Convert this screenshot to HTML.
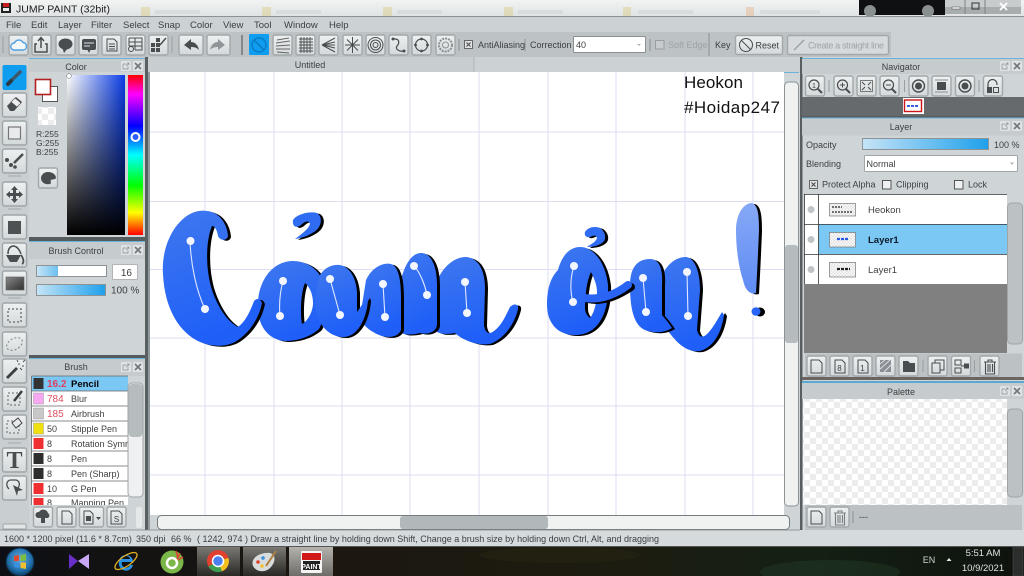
<!DOCTYPE html>
<html><head><meta charset="utf-8"><title>JUMP PAINT</title>
<style>
html,body{margin:0;padding:0;width:1024px;height:576px;overflow:hidden;background:#cfd5d7}
svg.root{display:block;position:absolute;left:0;top:0;filter:blur(.35px)}
text{font-family:"Liberation Sans",sans-serif;font-size:9px;fill:#3c3f41}
.c{text-anchor:middle}
.ic{fill:none;stroke:#4a4d4f;stroke-width:1.2}
.f{fill:#4a4d4f;stroke:none}
.l{stroke:#dddcf2;stroke-width:1}
</style></head><body>
<svg class="root" width="1024" height="576" viewBox="0 0 1024 576" xmlns="http://www.w3.org/2000/svg">
<defs>
<linearGradient id="gb" x1="0" y1="0" x2="0" y2="1"><stop offset="0" stop-color="#eef1f1"/><stop offset="1" stop-color="#d3d8da"/></linearGradient>
<linearGradient id="blue" x1="0" y1="0" x2="0.3" y2="1"><stop offset="0" stop-color="#3f78ee"/><stop offset="1" stop-color="#1f5ff8"/></linearGradient>
<linearGradient id="ex" x1="0" y1="0" x2="0" y2="1"><stop offset="0" stop-color="#86a8f6"/><stop offset="1" stop-color="#5f8cf4"/></linearGradient>
<linearGradient id="sl" x1="0" y1="0" x2="1" y2="0"><stop offset="0" stop-color="#c6e4f6"/><stop offset="1" stop-color="#1ea0ec"/></linearGradient>
<linearGradient id="sl2" x1="0" y1="0" x2="1" y2="0"><stop offset="0" stop-color="#c6e4f6"/><stop offset="1" stop-color="#6cc0f0"/></linearGradient>
<linearGradient id="sv" x1="0" y1="0" x2="1" y2="0"><stop offset="0" stop-color="#fff"/><stop offset="1" stop-color="#0a3ce6"/></linearGradient>
<linearGradient id="sk" x1="0" y1="0" x2="0" y2="1"><stop offset="0" stop-color="#000" stop-opacity="0"/><stop offset="1" stop-color="#000"/></linearGradient>
<linearGradient id="hue" x1="0" y1="0" x2="0" y2="1"><stop offset="0" stop-color="#f00"/><stop offset=".12" stop-color="#f0f"/><stop offset=".32" stop-color="#00f"/><stop offset=".5" stop-color="#0ff"/><stop offset=".69" stop-color="#0f0"/><stop offset=".86" stop-color="#ff0"/><stop offset="1" stop-color="#f00"/></linearGradient>
<linearGradient id="title" x1="0" y1="0" x2="0" y2="1"><stop offset="0" stop-color="#f2f4f4"/><stop offset="1" stop-color="#dfe3e3"/></linearGradient>
<linearGradient id="grad" x1="0" y1="0" x2="1" y2="1"><stop offset="0" stop-color="#888"/><stop offset="1" stop-color="#2e2e2e"/></linearGradient>
<linearGradient id="task" x1="0" y1="0" x2="1" y2="0"><stop offset="0" stop-color="#0d0f14"/><stop offset=".3" stop-color="#1c1710"/><stop offset=".6" stop-color="#1d1c10"/><stop offset=".8" stop-color="#142014"/><stop offset="1" stop-color="#0e120e"/></linearGradient>
<linearGradient id="tb" x1="0" y1="0" x2="0" y2="1"><stop offset="0" stop-color="#7a7873"/><stop offset="1" stop-color="#2a2824"/></linearGradient>
<linearGradient id="tb2" x1="0" y1="0" x2="0" y2="1"><stop offset="0" stop-color="#b4b2ad"/><stop offset="1" stop-color="#6e6c68"/></linearGradient>
<radialGradient id="orb" cx=".5" cy=".4" r=".6"><stop offset="0" stop-color="#6bb0e0"/><stop offset=".7" stop-color="#1f6ea8"/><stop offset="1" stop-color="#0d3a5c"/></radialGradient>
<pattern id="chk" width="12" height="12" patternUnits="userSpaceOnUse"><rect width="12" height="12" fill="#fff"/><rect width="6" height="6" fill="#ececec"/><rect x="6" y="6" width="6" height="6" fill="#ececec"/></pattern>
<pattern id="chk2" width="3" height="3" patternUnits="userSpaceOnUse"><rect width="3" height="3" fill="#fff"/><rect width="1.5" height="1.5" fill="#ddd"/><rect x="1.5" y="1.5" width="1.5" height="1.5" fill="#ddd"/></pattern>
<rect id="B" width="19" height="20" rx="2" fill="url(#gb)" stroke="#a2a8aa" stroke-width="1.4"/>
<rect id="T" width="24" height="24" rx="2" fill="url(#gb)" stroke="#9fa5a7" stroke-width="1.4"/>
<g id="pop"><rect width="10" height="10" rx="1" fill="#dfe3e5"/><path d="M2,3H5M2,3V8H7V5M5,5L8,2M6,2H8V4" fill="none" stroke="#9aa0a2" stroke-width=".9"/><rect x="12" width="10" height="10" rx="1" fill="#dfe3e5"/><path d="M14,2L20,8M20,2L14,8" stroke="#70767a" stroke-width="1.6"/></g>
<path id="p-c" d="M207,211C218,212 227,222 228,236C227,241 220,241 218,236C217,230 215,226 212,226C206,240 205,268 212,290C218,308 228,322 238,327C245,322 250,312 254,301C257,298 260,298 262,303C259,318 250,333 235,342C225,347 212,347 200,342C180,333 165,310 163,275C161,245 175,222 190,214C196,211 201,210 207,211Z"/>
<path id="p-h1" d="M293,220C297,214 310,211 317,213C323,217 322,227 314,232C308,236 302,238 295,239C300,235 308,230 310,224C309,220 305,221 301,225C296,229 292,226 293,220Z"/>
<path id="p-bowl" fill-rule="evenodd" d="M258,305C258,280 273,261 293,261C306,261 316,268 321,277C325,285 325,325 318,330C308,338 296,341 285,341C268,340 257,325 258,305ZM305,283C301,292 300,312 302,324C307,322 313,312 313,303C313,295 310,287 305,283Z"/>
<path id="p-stem" d="M320,275C325,267 333,264 340,265C350,267 356,278 357,292L357,312C360,308 363,303 367,297L368,300C367,315 360,335 345,337C330,338 318,325 316,310C315,298 316,285 320,275Z"/>
<path id="p-m1" d="M366,280C372,267 384,262 391,264C400,267 401,285 401,300L401,330C398,337 390,338 382,336C372,333 362,325 360,318Z"/>
<path id="p-m2" d="M399,288C403,268 410,254 420,253C432,252 437,268 437,285L437,325C436,332 428,335 420,333C412,335 402,336 398,330Z"/>
<path id="p-m3" d="M433,290C441,268 452,258 465,257C478,257 485,270 485,288L484,325C485,333 489,335 494,331C502,325 506,315 510,307C514,303 519,304 518,309C515,322 506,338 490,344C478,346 462,340 455,333C445,335 436,334 433,328Z"/>
<path id="p-o" fill-rule="evenodd" d="M547,305C547,290 550,278 558,270C562,255 570,247 580,247C595,247 606,265 608,285C609,310 600,335 575,335C555,335 547,320 547,305ZM591,272C586,282 585,300 585,308C585,312 587,316 590,318C595,312 597,300 597,292C597,285 594,278 591,272Z"/>
<path id="p-h2" d="M585,232C588,227 595,226 600,228C606,232 607,240 602,243C598,246 592,247 587,247C591,244 596,242 597,238C596,234 592,236 590,237C586,238 584,235 585,232Z"/>
<path id="p-n1" d="M630,285C630,268 637,259 650,259C660,259 663,270 662,285L662,315C668,322 670,325 672,328C664,333 655,333 648,331C635,328 630,312 630,285Z"/>
<path id="p-n2" d="M658,285C664,268 672,258 685,257C695,257 700,272 700,290L697,330C699,337 702,338 706,335C712,330 717,320 722,312L724,315C722,330 715,347 700,351C685,353 675,340 668,331C660,320 658,300 658,285Z"/>
<path id="p-ex" d="M752,203C758,205 759,215 759,230C758,255 757,275 756,293C750,295 745,290 743,280C738,265 736,245 736,230C736,215 743,203 752,203Z"/>
</defs>

<!-- title bar -->
<rect width="1024" height="17" fill="url(#title)"/>
<g opacity=".4"><rect x="141" y="7" width="9" height="9" fill="#d8c878"/><rect x="262" y="7" width="9" height="9" fill="#d8c878"/><rect x="383" y="7" width="9" height="9" fill="#d8c878"/><rect x="504" y="7" width="9" height="9" fill="#d8c878"/><rect x="623" y="7" width="8" height="9" fill="#d8c878"/><rect x="746" y="7" width="8" height="9" fill="#e8b080"/>
<rect x="155" y="10" width="45" height="4" fill="#c8cccc"/><rect x="276" y="10" width="45" height="4" fill="#c8cccc"/><rect x="397" y="10" width="45" height="4" fill="#c8cccc"/><rect x="518" y="10" width="45" height="4" fill="#c8cccc"/><rect x="638" y="10" width="55" height="4" fill="#c8cccc"/><rect x="760" y="10" width="60" height="4" fill="#c8cccc"/></g>
<rect x="859" y="0" width="86" height="15" fill="#0e1012"/>
<circle cx="870" cy="11" r="6" fill="#8a8f90"/><circle cx="928" cy="11" r="6" fill="#8a8f90"/>
<rect x="945" y="0" width="76" height="14" fill="#a8adae"/>
<rect x="945" y="0" width="76" height="7" fill="#c8cccc"/>
<path d="M965,0V14M985,0V14" stroke="#7a7f80"/>
<rect x="952" y="7" width="8" height="2" fill="#fff" stroke="#444" stroke-width=".5"/>
<rect x="972" y="3" width="7" height="6" fill="none" stroke="#333"/>
<path d="M1000,3L1007,10M1007,3L1000,10" stroke="#fff" stroke-width="1.800"/>
<rect x="1" y="3" width="10" height="10" fill="#222"/><rect x="3" y="3" width="6" height="4" fill="#c82020"/><rect x="3" y="8" width="6" height="3" fill="#eee"/>
<text x="16" y="12.5" style="font-size:10.5px;fill:#1c1c1c">JUMP PAINT (32bit)</text>

<!-- menu -->
<rect y="16" width="1024" height="1" fill="#8e9294"/>
<rect y="17" width="1024" height="15" fill="#ccd2d4"/>
<g>
<text x="6" y="28" style="font-size:9.5px">File</text><text x="31" y="28" style="font-size:9.5px">Edit</text><text x="58" y="28" style="font-size:9.5px">Layer</text><text x="91" y="28" style="font-size:9.5px">Filter</text><text x="123" y="28" style="font-size:9.5px">Select</text><text x="158" y="28" style="font-size:9.5px">Snap</text><text x="190" y="28" style="font-size:9.5px">Color</text><text x="223" y="28" style="font-size:9.5px">View</text><text x="254" y="28" style="font-size:9.5px">Tool</text><text x="284" y="28" style="font-size:9.5px">Window</text><text x="329" y="28" style="font-size:9.5px">Help</text>
</g>

<!-- toolbar -->
<rect y="32" width="891" height="25" fill="#bdc3c5"/>
<rect x="891" y="32" width="133" height="25" fill="#ccd2d4"/>
<path d="M3,36V53M172,36V53" stroke="#9a9ea0"/><path d="M242,35V55" stroke="#5e6264" stroke-width="1.2"/>
<use href="#B" x="9" y="35"/><use href="#B" x="32" y="35"/><use href="#B" x="56" y="35"/><use href="#B" x="79" y="35"/><use href="#B" x="102" y="35"/><use href="#B" x="126" y="35"/><use href="#B" x="149" y="35"/>
<rect x="179" y="35" width="24" height="20" rx="2" fill="url(#gb)" stroke="#a2a8aa" stroke-width="1.4"/><rect x="207" y="35" width="23" height="20" rx="2" fill="url(#gb)" stroke="#a2a8aa" stroke-width="1.4"/>
<rect x="249" y="34" width="20" height="21" rx="1" fill="#0f9df0"/>
<use href="#B" x="273" y="35"/><use href="#B" x="296" y="35"/><use href="#B" x="319" y="35"/><use href="#B" x="343" y="35"/><use href="#B" x="366" y="35"/><use href="#B" x="389" y="35"/><use href="#B" x="412" y="35"/><use href="#B" x="436" y="35"/>
<!-- toolbar icons -->
<path d="M14,50a3.5,3.5 0 0 1 .5,-7a4.7,4.7 0 0 1 8.5,-.5a3.8,3.8 0 0 1 .5,7.5z" fill="#f4f8fb" stroke="#4f9fe0" stroke-width="1.4"/>
<path class="ic" d="M37,44H35V52H47V44H45M41,48V38M38,41L41,37.500L44,41" style="stroke-width:1.5"/>
<ellipse class="f" cx="65.500" cy="44" rx="7" ry="5.500"/><path class="f" d="M62,47L64,53L68,48Z"/>
<rect class="f" x="82" y="39" width="14" height="11" rx="2"/><path class="f" d="M87,49L89,53L91,49Z"/><path d="M84,43H94M84,46H90" stroke="#dde" stroke-width="1"/>
<path class="ic" d="M107,39H114L117,42V51H107ZM109,44H115M109,46.500H115M109,49H115" style="stroke-width:1"/>
<path class="ic" d="M129,38H142V50H135M129,38V46M129,42H142M129,46H142M135,38V50" style="stroke-width:1"/><circle class="ic" cx="131" cy="49" r="2.500" style="stroke-width:1"/>
<path class="f" d="M151,43H155V47H151ZM156,43H160V47H156ZM151,48H155V52H151ZM156,48H160V52H156ZM156,38H160V42H156Z"/><path d="M160,45L166,38" stroke="#4a4d4f" stroke-width="1.500"/>
<path d="M191,39L184,45L191,50V47C195,47 197,48 199,50C198,45 195,42 191,42Z" fill="#4a4d4f"/>
<path d="M218,39L225,45L218,50V47C214,47 212,48 210,50C211,45 214,42 218,42Z" fill="#8f9597"/>
<g><circle cx="259" cy="45" r="7" fill="none" stroke="#0a78c0" stroke-width="1.300"/><path d="M254,40L264,50" stroke="#0a78c0" stroke-width="1.300"/></g>
<path class="ic" d="M277,40L289,38M276,43L290,41M276,46L290,45M276,49L290,49M277,52L289,53" style="stroke-width:.9;stroke:#666"/>
<path class="ic" d="M299,39H313M299,42H313M299,45H313M299,48H313M299,51H313M301,37V53M304,37V53M307,37V53M310,37V53" style="stroke-width:.9"/>
<path class="ic" d="M322,45L335,38M322,45L335,42M322,45L335,45M322,45L335,48M322,45L335,52" style="stroke-width:1"/>
<path class="ic" d="M352.500,37V53M345,45H360M347,39.500L358,50.500M358,39.500L347,50.500" style="stroke-width:1"/>
<circle class="ic" cx="375.500" cy="45" r="7.500" style="stroke-width:1"/><circle class="ic" cx="375.500" cy="45" r="5" style="stroke-width:1"/><circle class="ic" cx="375.500" cy="45" r="2.500" style="stroke-width:1"/>
<path class="ic" d="M393,39H396C400,40 399,44 397,46C395,49 399,52 404,51"/><circle class="f" cx="393" cy="39" r="1.500"/><circle class="f" cx="404" cy="51" r="1.500"/>
<circle class="ic" cx="421.500" cy="45" r="6"/><circle class="f" cx="421.500" cy="39" r="1.400"/><circle class="f" cx="427.500" cy="45" r="1.400"/><circle class="f" cx="421.500" cy="51" r="1.400"/><circle class="f" cx="415.500" cy="45" r="1.400"/>
<circle cx="445.500" cy="45" r="6.500" fill="none" stroke="#8a8f91" stroke-dasharray="2 1" stroke-width="2"/><circle cx="445.500" cy="45" r="3" fill="none" stroke="#8a8f91"/>
<path d="M459,39V51M525,39V51M650,39V51" stroke="#8a8f91"/>
<rect x="464.500" y="40.500" width="8" height="8" fill="#dfe3e4" stroke="#666"/><path d="M466.500,42.500L470.500,46.500M470.500,42.500L466.500,46.500" stroke="#444"/>
<text x="478" y="48">AntiAliasing</text>
<text x="530" y="48">Correction</text>
<rect x="573.500" y="36.500" width="72" height="16" rx="1" fill="#fff" stroke="#8a8f91"/>
<text x="576" y="48">40</text>
<path d="M637,44H641L639,46Z" fill="#b0b4b6"/>
<rect x="655.500" y="40.500" width="8.500" height="8.500" fill="#c6cbcd" stroke="#9a9ea0"/>
<text x="668" y="48" style="fill:#9ea3a5">Soft Edge</text>
<path d="M709,33V56" stroke="#8a8f91"/>
<text x="715" y="48">Key</text>
<rect x="735.500" y="35.500" width="47" height="19" rx="2" fill="url(#gb)" stroke="#a2a8aa" stroke-width="1.4"/>
<circle cx="746" cy="45" r="6.500" fill="none" stroke="#4a4d4f"/><path d="M741.500,40.500L750.500,49.500" stroke="#4a4d4f"/>
<text x="755.500" y="48.500">Reset</text>
<rect x="787.500" y="35.500" width="101" height="19" rx="2" fill="#d6dadc" stroke="#a2a8aa" stroke-width="1.4"/>
<path d="M794,50L804,40" stroke="#9a9ea0" stroke-width="1.300"/>
<text x="808" y="48.500" style="fill:#9ea3a5" textLength="76">Create a straight line</text>

<!-- left tools column -->
<rect y="57" width="29" height="473" fill="#c9cfd1"/>
<rect x="2.500" y="65" width="24" height="25" rx="2" fill="#0f9df0"/>
<path d="M8,84L20,72" stroke="#3c5a6c" stroke-width="3.500" stroke-linecap="round"/><path d="M8,84L11,81" stroke="#2a3a44" stroke-width="4" stroke-linecap="round"/>
<use href="#T" x="2.500" y="93"/><use href="#T" x="2.500" y="121"/><use href="#T" x="2.500" y="149"/><use href="#T" x="2.500" y="182"/><use href="#T" x="2.500" y="215"/><use href="#T" x="2.500" y="243"/><use href="#T" x="2.500" y="271"/><use href="#T" x="2.500" y="303"/><use href="#T" x="2.500" y="332"/><use href="#T" x="2.500" y="359"/><use href="#T" x="2.500" y="387"/><use href="#T" x="2.500" y="415"/><use href="#T" x="2.500" y="448"/><use href="#T" x="2.500" y="476"/>
<path d="M8,176H21M8,209H21M8,298H21M8,443H21" stroke="#a4a9ab"/>
<rect x="3" y="524" width="23" height="5" rx="1" fill="#e2e6e7" stroke="#9fa5a7"/>
<!-- eraser -->
<path class="f" d="M7,106L16,97L22,102L14,111H10Z"/><path d="M15,98L21,103L17,107L11,102Z" fill="#eee" stroke="#4a4d4f" stroke-width=".6"/>
<rect x="8.500" y="127" width="12" height="12" fill="#e8eaeb" stroke="#777" stroke-width="1.200"/>
<circle class="f" cx="7" cy="160" r="2"/><circle class="f" cx="11" cy="165" r="2"/><circle class="f" cx="15" cy="167" r="1.800"/><path d="M14,163L23,154" stroke="#4a4d4f" stroke-width="2.500"/>
<path class="f" d="M14.500,186L18,190H16V193H19V191L23,194.500L19,198V196H16V199H18L14.500,203L11,199H13V196H10V198L6,194.500L10,191V193H13V190H11Z"/>
<rect x="8" y="221" width="13" height="13" fill="#4e5153"/>
<path class="f" d="M6,255H21L17,262H10Z"/><path class="ic" d="M8,254C8,249 10,246 14,246C18,247 20,251 21,254" style="stroke-width:1.500"/><path d="M21,255C24,259 24,263 22,264" fill="none" stroke="#4a4d4f" stroke-width="1.800"/>
<rect x="6" y="277" width="18" height="13" fill="url(#grad)" stroke="#666" stroke-width=".7"/>
<rect x="8" y="309" width="13" height="13" fill="none" stroke="#666" stroke-width="1.300" stroke-dasharray="2 2"/>
<ellipse cx="14.500" cy="344" rx="8.500" ry="5.500" transform="rotate(-30 14.500 344)" fill="none" stroke="#8a8f91" stroke-width="1.200" stroke-dasharray="2 2"/>
<path d="M7,378L17,368" stroke="#3c3f41" stroke-width="2.800"/><path d="M19,363V365M22,366H24M20,368L22,370M18,362L17,360M23,362L25,360" stroke="#555" stroke-width="1"/>
<rect x="8" y="393" width="12" height="12" fill="none" stroke="#666" stroke-dasharray="2 2"/><path d="M14,401L22,391" stroke="#3c3f41" stroke-width="2.500"/>
<rect x="7" y="421" width="12" height="12" fill="none" stroke="#666" stroke-dasharray="2 2"/><path d="M12,423L18,418L22,423L16,428Z" fill="#e8eaeb" stroke="#444"/>
<text x="14.500" y="468" class="c" style="font-family:'Liberation Serif',serif;font-size:24px;font-weight:bold;fill:#4a4d4f">T</text>
<path class="ic" d="M9,489C5,485 7,480 11,480H16C20,481 20,485 18,488" style="stroke-width:1.300"/><path class="f" d="M13,485L23,490L18,491L17,496Z"/>

<!-- color panel -->
<rect x="29" y="57" width="116" height="181" fill="#cfd5d7"/>
<rect x="29" y="57" width="116" height="15" fill="#c6ccce"/>
<rect x="29" y="58" width="116" height="1" fill="#6cb2d8"/>
<text x="76" y="70" class="c">Color</text>
<use href="#pop" x="121" y="61"/>
<rect x="42.500" y="86.500" width="15" height="15" fill="#fff" stroke="#555"/>
<rect x="35.500" y="79.500" width="15" height="15" fill="#fff" stroke="#b42020" stroke-width="1.600"/>
<rect x="38" y="107" width="18" height="18" fill="url(#chk)"/>
<text x="36" y="137" style="font-size:8.500px">R:255</text><text x="36" y="146" style="font-size:8.500px">G:255</text><text x="36" y="155" style="font-size:8.500px">B:255</text>
<use href="#B" x="38.500" y="168"/>
<path class="f" d="M48,172C43,172 41,176 41,178C41,183 46,185 50,184C52,183 50,181 51,180C52,179 55,180 56,178C56,175 53,172 48,172Z"/>
<rect x="67" y="75" width="58" height="160" fill="url(#sv)"/><rect x="67" y="75" width="58" height="160" fill="url(#sk)"/>
<circle cx="69" cy="76" r="2.300" fill="#fff" stroke="#666" stroke-width=".5"/>
<rect x="128" y="75" width="15" height="160" fill="url(#hue)"/>
<circle cx="135.500" cy="137" r="4" fill="#2a5cff" stroke="#fff" stroke-width="2"/>
<rect x="29" y="237" width="116" height="4" fill="#565b5e"/>
<!-- brush control -->
<rect x="29" y="241" width="116" height="114" fill="#cfd5d7"/>
<rect x="29" y="242" width="116" height="17" fill="#c6ccce"/>
<rect x="29" y="241" width="116" height="1" fill="#6cb2d8"/>
<text x="76" y="254" class="c">Brush Control</text>
<use href="#pop" x="121" y="245"/>
<rect x="36.500" y="265.500" width="70" height="11" fill="#fff" stroke="#8d9294"/><rect x="37" y="266" width="21" height="10" fill="url(#sl2)"/>
<rect x="112.500" y="264.500" width="25" height="15" rx="1" fill="#fff" stroke="#b0b4b6"/><text x="132" y="276" style="font-size:10px;text-anchor:end">16</text>
<rect x="36.500" y="284.500" width="69" height="11" fill="url(#sl)" stroke="#8d9294"/>
<text x="111" y="293.500" style="font-size:10px">100 %</text>
<rect x="29" y="355" width="116" height="3" fill="#565b5e"/>
<!-- brush list -->
<rect x="29" y="358" width="116" height="172" fill="#cfd5d7"/>
<rect x="29" y="358" width="116" height="18" fill="#c6ccce"/>
<rect x="29" y="358" width="116" height="1" fill="#6cb2d8"/>
<text x="76" y="370" class="c">Brush</text>
<use href="#pop" x="121" y="362"/>
<rect x="31.500" y="376" width="96.500" height="129" fill="#fff"/>
<rect x="31.500" y="376" width="96.500" height="15" fill="#7cc8f4"/>
<path d="M31.500,376H128M31.500,391H128M31.500,406H128M31.500,421H128M31.500,436H128M31.500,451H128M31.500,466H128M31.500,481H128M31.500,496H128M31.500,376V505" stroke="#666" fill="none" stroke-width=".8"/>
<rect x="33.500" y="378" width="10" height="11" fill="#333"/><rect x="33.500" y="393" width="10" height="11" fill="#f8a8f0" stroke="#888" stroke-width=".4"/><rect x="33.500" y="408" width="10" height="11" fill="#c8c8c8" stroke="#888" stroke-width=".4"/><rect x="33.500" y="423" width="10" height="11" fill="#f0e010" stroke="#888" stroke-width=".4"/><rect x="33.500" y="438" width="10" height="11" fill="#f03030"/><rect x="33.500" y="453" width="10" height="11" fill="#2e2e2e"/><rect x="33.500" y="468" width="10" height="11" fill="#2e2e2e"/><rect x="33.500" y="483" width="10" height="11" fill="#f03030"/><rect x="33.500" y="498" width="10" height="7" fill="#f03030"/>
<g>
<text x="47" y="387" style="font-size:10px;font-weight:bold;fill:#e04060">16.2</text><text x="71" y="387" style="font-size:9.500px;font-weight:bold;fill:#000">Pencil</text>
<text x="47" y="402" style="font-size:10px;fill:#e05060">784</text><text x="71" y="402">Blur</text>
<text x="47" y="417" style="font-size:10px;fill:#e05060">185</text><text x="71" y="417">Airbrush</text>
<text x="47" y="432">50</text><text x="71" y="432">Stipple Pen</text>
<text x="47" y="447">8</text><text x="71" y="447">Rotation Symr</text>
<text x="47" y="462">8</text><text x="71" y="462">Pen</text>
<text x="47" y="477">8</text><text x="71" y="477">Pen (Sharp)</text>
<text x="47" y="492">10</text><text x="71" y="492">G Pen</text>
<svg x="31" y="496" width="97" height="9"><text x="16" y="10">8</text><text x="40" y="10">Mapping Pen</text></svg>
</g>
<rect x="128" y="383" width="15" height="114" rx="4" fill="#eef0f1" stroke="#a0a5a7"/>
<rect x="128.500" y="384" width="14" height="53" rx="4" fill="#b6bcbe"/>
<use href="#B" x="33.500" y="507"/><use href="#B" x="57" y="507"/><rect x="79.500" y="507" width="24" height="20" rx="2" fill="url(#gb)" stroke="#a2a8aa" stroke-width="1.400"/><use href="#B" x="107" y="507"/>
<rect x="136" y="507" width="6" height="21" rx="2" fill="#e4e8e9"/>
<path class="f" d="M38,518a3,3 0 0 1 1,-6a5,5 0 0 1 9,1a3,3 0 0 1 0,5H45V523H41V518Z"/>
<path class="ic" d="M62,511H69L72,514V524H62Z" style="stroke-width:1"/>
<path class="ic" d="M84,511H90L93,514V524H84Z" style="stroke-width:1"/><rect class="f" x="86" y="516" width="5" height="5"/><path class="f" d="M96,517H101L98.500,520Z"/>
<path class="ic" d="M111,511H119L122,514V524H111Z" style="stroke-width:1"/><text x="116.500" y="522" class="c" style="font-size:8px">S</text>

<rect x="145" y="57" width="3.500" height="473" fill="#5a5f62"/>

<!-- canvas -->
<rect x="148" y="57" width="652" height="15" fill="#ccd2d4"/>
<rect x="148" y="57" width="326" height="15" fill="#c8ced0"/>
<path d="M474,57V72" stroke="#b0b6b8"/>
<text x="310" y="68" class="c">Untitled</text>
<rect x="148" y="72" width="636" height="443" fill="#fff"/>
<path class="l" d="M205,72V515M274,72V515M342,72V515M410,72V515M479,72V515M548,72V515M616,72V515M685,72V515M753,72V515M148,132H784M148,201.500H784M148,269.500H784M148,338H784M148,406H784M148,475H784"/>
<text x="684" y="88" style="font-size:17px;fill:#111" textLength="59">Heokon</text>
<text x="684" y="113" style="font-size:17px;fill:#111" textLength="96">#Hoidap247</text>

<!-- lettering -->
<use href="#p-m3" x="3" y="1" fill="#000"/><use href="#p-m3" fill="url(#blue)"/>
<use href="#p-m2" x="3" y="1" fill="#000"/><use href="#p-m2" fill="url(#blue)"/>
<use href="#p-m1" x="3" y="1" fill="#000"/><use href="#p-m1" fill="url(#blue)"/>
<use href="#p-bowl" x="3" y="1" fill="#000"/><use href="#p-bowl" fill="url(#blue)"/>
<use href="#p-stem" x="3" y="1" fill="#000"/><use href="#p-stem" fill="url(#blue)"/>
<use href="#p-c" x="3" y="1" fill="#000"/><use href="#p-c" fill="url(#blue)"/>
<use href="#p-h1" x="3" y="1" fill="#000"/><use href="#p-h1" fill="#2f6cf2"/>
<use href="#p-n2" x="3" y="1" fill="#000"/><use href="#p-n2" fill="url(#blue)"/>
<use href="#p-n1" x="3" y="1" fill="#000"/><use href="#p-n1" fill="url(#blue)"/>
<use href="#p-o" x="3" y="1" fill="#000"/><use href="#p-o" fill="url(#blue)"/>
<path d="M588,299C601,302 615,298 631,287" fill="none" stroke="#000" stroke-width="8" stroke-linecap="round"/>
<path d="M585,298C600,300 615,295 628,285" fill="none" stroke="#2a64f4" stroke-width="8" stroke-linecap="round"/>
<use href="#p-h2" x="3" y="1" fill="#000"/><use href="#p-h2" fill="#2f6cf2"/>
<use href="#p-ex" x="3" y="1" fill="#000"/><use href="#p-ex" fill="url(#ex)"/>
<ellipse cx="760" cy="312" rx="5" ry="4.500" fill="#000"/><ellipse cx="756" cy="311.500" rx="4.500" ry="4.300" fill="#2a64f4"/>
<g fill="none" stroke="#dfe8ff" stroke-width="1.100">
<path d="M190,241C191,265 196,290 205,309M283,281C280,292 279,305 280,316M330,279L340,315M383,284L385,317M414,266C420,272 425,285 427,295M465,282L467,313M574,266C570,278 570,292 573,302M643,278L646,312M687,272L688,316"/></g>
<g fill="#f4f6ff"><circle cx="190.500" cy="241" r="4"/><circle cx="205" cy="309" r="4"/><circle cx="283" cy="281" r="4"/><circle cx="280" cy="316" r="4"/><circle cx="330" cy="279" r="4"/><circle cx="340" cy="315" r="4"/><circle cx="383" cy="284" r="4"/><circle cx="385" cy="317" r="4"/><circle cx="414" cy="266" r="4"/><circle cx="427" cy="295" r="4"/><circle cx="465" cy="282" r="4"/><circle cx="467" cy="313" r="4"/><circle cx="574" cy="266" r="4"/><circle cx="573" cy="302" r="4"/><circle cx="643" cy="278" r="4"/><circle cx="646" cy="312" r="4"/><circle cx="687" cy="272" r="4"/><circle cx="688" cy="316" r="4"/></g>

<!-- scrollbars -->
<rect x="784" y="72" width="16" height="458" fill="#cfd5d7"/>
<rect x="784" y="72" width="15" height="1" fill="#6cb2d8"/>
<rect x="784.500" y="82" width="14" height="424" rx="4" fill="#f0f2f2" stroke="#8d9294"/>
<rect x="785" y="245" width="13" height="98" rx="3" fill="#b6bcbe"/>
<rect x="148" y="515" width="652" height="15" fill="#cfd5d7"/>
<rect x="157.500" y="515.500" width="632" height="14" rx="4" fill="#f0f2f2" stroke="#777c7e"/>
<rect x="400" y="516" width="148" height="13" rx="3" fill="#b2b8ba"/>
<rect x="148" y="72" width="2" height="458" fill="#8f9a9e"/>

<!-- right side -->
<rect x="800" y="57" width="224" height="473" fill="#cfd5d7"/>
<rect x="800" y="57" width="2.500" height="473" fill="#585d60"/>
<rect x="802" y="58" width="222" height="1" fill="#6cb2d8"/>
<rect x="802" y="59" width="222" height="15" fill="#c6ccce"/>
<text x="901" y="70" class="c">Navigator</text>
<use href="#pop" x="1000" y="61"/>
<use href="#B" x="805.500" y="76"/><use href="#B" x="834" y="76"/><use href="#B" x="857" y="76"/><use href="#B" x="880" y="76"/><use href="#B" x="909" y="76"/><use href="#B" x="932" y="76"/><use href="#B" x="955.500" y="76"/><use href="#B" x="983.500" y="76"/>
<path d="M829,80V92M904.500,80V92M979,80V92" stroke="#9a9ea0"/>
<circle class="ic" cx="814" cy="85" r="5"/><path d="M818,89L822,93" stroke="#4a4d4f" stroke-width="2"/><text x="814" y="88" class="c" style="font-size:7px">1</text>
<circle class="ic" cx="842.500" cy="85" r="5"/><path d="M846,89L850,93" stroke="#4a4d4f" stroke-width="2"/><path d="M840,85H845M842.500,82.500V87.500" stroke="#4a4d4f"/>
<rect x="860.500" y="80.500" width="12" height="11" fill="none" stroke="#777"/><path d="M862,82L865,85M871,82L868,85M862,90L865,87M871,90L868,87" stroke="#4a4d4f"/>
<circle class="ic" cx="888.500" cy="85" r="5"/><path d="M892,89L896,93" stroke="#4a4d4f" stroke-width="2"/><path d="M886,85H891" stroke="#4a4d4f"/>
<circle cx="918.500" cy="86" r="6" fill="none" stroke="#4a4d4f" stroke-width="1.400"/><circle class="f" cx="918.500" cy="86" r="3.500"/>
<rect class="f" x="937" y="82" width="9" height="8"/><path d="M935,80H948M935,92H948" stroke="#8a8f91"/>
<circle cx="965" cy="86" r="6" fill="none" stroke="#4a4d4f" stroke-width="1.400"/><circle class="f" cx="965" cy="86" r="3.500"/>
<path class="ic" d="M988,87V84A4.500,4.500 0 0 1 997,84V85"/><rect class="f" x="987" y="87" width="5" height="6"/><rect x="993.500" y="87.500" width="5" height="5" fill="none" stroke="#4a4d4f"/>
<rect x="802" y="97" width="222" height="19" fill="#666a6c"/>
<rect x="903" y="98" width="21" height="16" fill="#fff"/><rect x="904.500" y="100" width="17" height="11.500" fill="#fff" stroke="#cc1414" stroke-width="1.400"/><path d="M907,106H919" stroke="#3a60e0" stroke-width="2" stroke-dasharray="3 1"/>
<rect x="802" y="116" width="222" height="2" fill="#585d60"/>
<rect x="802" y="117.500" width="222" height="1" fill="#6cb2d8"/>
<rect x="802" y="118.500" width="222" height="17" fill="#c6ccce"/>
<text x="901" y="130" class="c">Layer</text>
<use href="#pop" x="1000" y="121"/>
<text x="806" y="148">Opacity</text>
<rect x="862.500" y="138.500" width="126" height="11" fill="url(#sl)" stroke="#8d9294"/>
<text x="994" y="148">100 %</text>
<text x="806" y="167">Blending</text>
<rect x="864.500" y="155.500" width="153" height="16" rx="1" fill="#fff" stroke="#a0a5a7"/>
<text x="866.500" y="167">Normal</text>
<path d="M1010,162.500H1014L1012,165Z" fill="#b0b4b6"/>
<rect x="809.500" y="180.500" width="8" height="8" fill="#dfe3e4" stroke="#666"/><path d="M811.500,182.500L815.500,186.500M815.500,182.500L811.500,186.500" stroke="#444"/>
<text x="822" y="187.500">Protect Alpha</text>
<rect x="882.500" y="180.500" width="8.500" height="8.500" fill="#eef0f1" stroke="#555"/>
<text x="896" y="187.500">Clipping</text>
<rect x="954.500" y="180.500" width="8.500" height="8.500" fill="#eef0f1" stroke="#555"/>
<text x="968" y="187.500">Lock</text>
<!-- layer list -->
<rect x="804" y="194" width="203" height="90" fill="#fff"/>
<rect x="818.500" y="224" width="188.500" height="30" fill="#7cc8f4"/>
<path d="M804,194.500H1007M804,224.500H1007M804,254.500H1007M818.500,194V284M804.500,194V284" stroke="#333" fill="none" stroke-width=".8"/>
<circle cx="811" cy="209.500" r="3.500" fill="#c0c4c6"/><circle cx="811" cy="239.500" r="3.500" fill="#c0c4c6"/><circle cx="811" cy="269.500" r="3.500" fill="#c0c4c6"/>
<rect x="829.500" y="203.500" width="26" height="12.500" fill="url(#chk2)" stroke="#777" stroke-width=".7"/><path d="M832,207H842M832,212H852" stroke="#222" stroke-width="1.300" stroke-dasharray="2 1"/>
<rect x="829.500" y="232.500" width="26" height="14.500" fill="url(#chk2)" stroke="#777" stroke-width=".7"/><path d="M837,239H849" stroke="#2a5ae0" stroke-width="2.200" stroke-dasharray="3 1"/>
<rect x="829.500" y="262.500" width="26" height="14.500" fill="url(#chk2)" stroke="#777" stroke-width=".7"/><path d="M837,269H850" stroke="#222" stroke-width="2.200" stroke-dasharray="3 1"/>
<text x="868" y="213" style="font-size:9.500px">Heokon</text>
<text x="868" y="243" style="font-size:9.500px;font-weight:bold;fill:#0a1a28">Layer1</text>
<text x="868" y="273" style="font-size:9.500px">Layer1</text>
<rect x="804" y="284" width="203" height="69" fill="#808080"/>
<rect x="1007.500" y="203" width="15" height="141" rx="4" fill="#bcc2c4" stroke="#a0a5a7"/>
<rect x="805" y="353.500" width="217" height="23.500" fill="#bcc2c4"/>
<use href="#B" x="807" y="356"/><use href="#B" x="830" y="356"/><use href="#B" x="853" y="356"/><use href="#B" x="876" y="356"/><use href="#B" x="899" y="356"/><use href="#B" x="928" y="356"/><use href="#B" x="951.500" y="356"/><use href="#B" x="980" y="356"/>
<path d="M923,360V372M974.500,360V372" stroke="#9a9ea0"/>
<path class="ic" d="M811,360H819L822,363V373H811Z" style="stroke-width:1"/>
<path class="ic" d="M835,360H842L845,363V373H835Z" style="stroke-width:1"/><text x="839.500" y="371" class="c" style="font-size:8px">8</text>
<path class="ic" d="M858,360H865L868,363V373H858Z" style="stroke-width:1"/><text x="862.500" y="371" class="c" style="font-size:8px">1</text>
<rect x="880" y="360" width="11" height="12" fill="#8a8f91"/><path d="M880,364L885,360M880,369L890,360M884,372L891,365" stroke="#dde" stroke-width="1"/>
<path class="f" d="M903,361H908L910,363H915V372H903Z"/>
<path class="ic" d="M932,363H940V373H932ZM935,363V360H944V370H940" style="stroke-width:1"/>
<rect class="ic" x="955" y="360" width="6" height="5" style="stroke-width:1"/><rect class="ic" x="955" y="368" width="6" height="5" style="stroke-width:1"/><rect class="f" x="964" y="363.500" width="5" height="5"/><path d="M961,366H964" stroke="#4a4d4f"/>
<path class="ic" d="M984,362H996M988,362V360H992V362M985.500,362V374H994.500V362M988,364V372M990,364V372M992.500,364V372" style="stroke-width:1.100"/>
<rect x="802" y="377" width="222" height="3" fill="#6b6460"/>
<rect x="802" y="381" width="222" height="2" fill="#5aa8d4"/>
<rect x="802" y="383" width="222" height="16" fill="#c6ccce"/>
<text x="901" y="395" class="c">Palette</text>
<use href="#pop" x="1000" y="386"/>
<rect x="803" y="399" width="204" height="106" fill="url(#chk)"/>
<rect x="1007.500" y="409" width="15" height="88" rx="4" fill="#bcc2c4" stroke="#a0a5a7"/>
<rect x="805" y="505" width="217" height="25" fill="#bcc2c4"/>
<use href="#B" x="807" y="507"/><use href="#B" x="830" y="507"/>
<path class="ic" d="M811,511H819L822,514V524H811Z" style="stroke-width:1"/>
<path d="M834,513H846M838,513V511H842V513M835.500,513V525H844.500V513M838,515V523M840,515V523M842.500,515V523" fill="none" stroke="#7a7f81" stroke-width="1.100"/>
<path d="M853,511V523" stroke="#8a8f91"/>
<text x="859" y="520">---</text>

<!-- status -->
<rect y="530" width="1024" height="16" fill="#d5dadc"/>
<path d="M0,530H800" stroke="#7f8486" stroke-width=".8"/>
<g>
<text x="4" y="542">1600 * 1200 pixel</text><text x="76" y="542">(11.6 * 8.7cm)</text><text x="136" y="542">350 dpi</text><text x="171" y="542">66 %</text><text x="197" y="542">( 1242, 974 )</text><text x="250.500" y="542" textLength="408.500">Draw a straight line by holding down Shift, Change a brush size by holding down Ctrl, Alt, and dragging</text>
</g>

<!-- taskbar -->
<rect y="546" width="1024" height="30" fill="url(#task)"/>
<rect y="546" width="1024" height="1" fill="#555"/>
<ellipse cx="830" cy="572" rx="70" ry="12" fill="#26402a" opacity=".4"/>
<ellipse cx="560" cy="555" rx="80" ry="8" fill="#2a2a14" opacity=".4"/>
<circle cx="20" cy="562" r="14" fill="url(#orb)" stroke="#0c2a44"/>
<path d="M14,556L19,555V561L14,561Z" fill="#e04830"/><path d="M20.500,555L26,554V560.500L20.500,561Z" fill="#7cc040"/><path d="M14,562.500H19V568L14,567Z" fill="#3a90e0"/><path d="M20.500,562.500H26V569L20.500,568Z" fill="#f0c030"/>
<path d="M69,554L78,561L69,569Z" fill="#6a2fc8"/><path d="M89,554L78,561L89,569Z" fill="#c8a8f4"/>
<path d="M119,562A7,7 0 1 1 133,562H122A4,4 0 0 0 130,565H133A7,7 0 0 1 119,562ZM122,559H130A4,3 0 0 0 122,559Z" fill="#2a90e0" fill-rule="evenodd"/>
<ellipse cx="126" cy="561" rx="13" ry="5" transform="rotate(-35 126 561)" fill="none" stroke="#e0b020" stroke-width="1.300"/>
<circle cx="172" cy="562" r="11.500" fill="#7ab648"/><circle cx="172" cy="563" r="5" fill="none" stroke="#fff" stroke-width="2.500"/><path d="M176,551L178,558M180,553L177,559M183,557L178,560" stroke="#e04030" stroke-width="1.500"/>
<rect x="197" y="547" width="43" height="29" fill="url(#tb)"/><rect x="243" y="547" width="43" height="29" fill="url(#tb)"/><rect x="289" y="547" width="44" height="29" fill="url(#tb2)"/>
<circle cx="218" cy="561" r="11" fill="#e04030"/><path d="M218,561L208.500,566.500A11,11 0 0 0 222,571.300Z" fill="#3aa050"/><path d="M218,561L228.500,558A11,11 0 0 1 222,571.300Z" fill="#f4c020"/><circle cx="218" cy="561" r="5.500" fill="#4a80f0" stroke="#fff" stroke-width="1.500"/>
<path d="M253,566C250,558 260,552 270,553C276,555 276,562 270,568C265,573 256,572 253,566Z" fill="#d8dcdc"/><circle cx="258" cy="562" r="1.800" fill="#e04030"/><circle cx="263" cy="558" r="1.800" fill="#3a90e0"/><circle cx="262" cy="566" r="1.800" fill="#f0c030"/><path d="M266,566L276,551" stroke="#b08040" stroke-width="2"/>
<rect x="301" y="551" width="21" height="22" rx="1" fill="#f4f4f4"/><rect x="302" y="553" width="19" height="7" fill="#d01818"/><rect x="303" y="561" width="17" height="9" fill="#222"/><text x="311.500" y="569" class="c" style="font-size:7px;font-weight:bold;fill:#fff">PAINT</text>
<text x="929" y="563" class="c" style="fill:#cfd2d2">EN</text>
<path d="M946.500,561L949,558L951.500,561Z" fill="#e8e8e8"/>
<text x="983" y="556" class="c" style="fill:#e0e2e2;font-size:9.500px">5:51 AM</text>
<text x="983" y="571" class="c" style="fill:#e0e2e2;font-size:9.500px">10/9/2021</text>
<rect x="1013" y="547" width="10" height="29" fill="#2c2e2e" stroke="#4a4c4c" stroke-width=".6"/>
</svg>
</body></html>
